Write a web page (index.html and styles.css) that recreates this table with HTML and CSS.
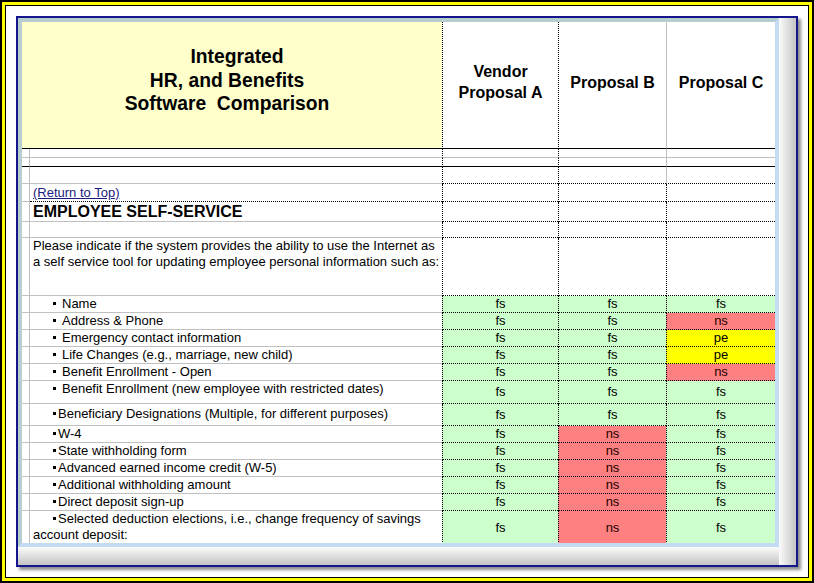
FILE: index.html
```html
<!DOCTYPE html>
<html>
<head>
<meta charset="utf-8">
<title>Integrated HR, and Benefits Software Comparison</title>
<link rel="stylesheet" href="styles.css">
</head>
<body>
<div class="frame">
  <div class="frame-yellow">
    <div class="frame-line">
      <div class="window">
        <div class="sheet">
          <table class="grid">
            <colgroup>
              <col class="w-a"><col class="w-b"><col class="w-c"><col class="w-d"><col class="w-e">
            </colgroup>
            <tr class="h127">
              <td colspan="2" class="title kb"><span class="t1">Integrated</span><br>HR, and Benefits<br>Software&nbsp; Comparison</td>
              <td class="hd dl kb">Vendor<br>Proposal A</td>
              <td class="hd dl kb">Proposal B</td>
              <td class="hd gl kb">Proposal C</td>
            </tr>
            <tr class="h9">
              <td class="a gb"></td><td class="gb"></td><td class="dl gb"></td><td class="dl gb"></td><td class="gl gb"></td>
            </tr>
            <tr class="h9">
              <td class="a kb"></td><td class="kb"></td><td class="dl kb"></td><td class="dl kb"></td><td class="gl kb"></td>
            </tr>
            <tr class="h17">
              <td class="a gb"></td><td class="gb"></td><td class="dl db"></td><td class="dl db"></td><td class="gl db"></td>
            </tr>
            <tr class="h18">
              <td class="a gb"></td><td class="b db"><a class="link" href="#top">(Return to Top)</a></td><td class="dl db"></td><td class="dl db"></td><td class="dl db"></td>
            </tr>
            <tr class="h20">
              <td class="a gb"></td><td class="b gb section">EMPLOYEE SELF-SERVICE</td><td class="dl db"></td><td class="dl db"></td><td class="dl db"></td>
            </tr>
            <tr class="h16">
              <td class="a gb"></td><td class="gb"></td><td class="dl db"></td><td class="dl db"></td><td class="dl db"></td>
            </tr>
            <tr class="h58">
              <td class="a gb"></td><td class="b gb top">Please indicate if the system provides the ability to use the Internet as<br>a self service tool for updating employee personal information such as:</td><td class="dl db"></td><td class="dl db"></td><td class="dl db"></td>
            </tr>
            <tr class="h17">
              <td class="a gb"></td><td class="b gb ind"><span class="bul sp"></span>Name</td>
              <td class="v fs">fs</td><td class="v fs">fs</td><td class="v fs">fs</td>
            </tr>
            <tr class="h17">
              <td class="a gb"></td><td class="b gb ind"><span class="bul sp"></span>Address &amp; Phone</td>
              <td class="v fs">fs</td><td class="v fs">fs</td><td class="v ns">ns</td>
            </tr>
            <tr class="h17">
              <td class="a gb"></td><td class="b gb ind"><span class="bul sp"></span>Emergency contact information</td>
              <td class="v fs">fs</td><td class="v fs">fs</td><td class="v pe">pe</td>
            </tr>
            <tr class="h17">
              <td class="a gb"></td><td class="b gb ind"><span class="bul sp"></span>Life Changes (e.g., marriage, new child)</td>
              <td class="v fs">fs</td><td class="v fs">fs</td><td class="v pe">pe</td>
            </tr>
            <tr class="h17">
              <td class="a gb"></td><td class="b gb ind"><span class="bul sp"></span>Benefit Enrollment - Open</td>
              <td class="v fs">fs</td><td class="v fs">fs</td><td class="v ns">ns</td>
            </tr>
            <tr class="h23">
              <td class="a gb"></td><td class="b gb ind top"><span class="bul sp"></span>Benefit Enrollment (new employee with restricted dates)</td>
              <td class="v fs">fs</td><td class="v fs">fs</td><td class="v fs">fs</td>
            </tr>
            <tr class="h22">
              <td class="a gb"></td><td class="b gb ind mid1"><span class="bul"></span>Beneficiary Designations (Multiple, for different purposes)</td>
              <td class="v fs">fs</td><td class="v fs">fs</td><td class="v fs">fs</td>
            </tr>
            <tr class="h17">
              <td class="a gb"></td><td class="b gb ind"><span class="bul"></span>W-4</td>
              <td class="v fs">fs</td><td class="v ns">ns</td><td class="v fs">fs</td>
            </tr>
            <tr class="h17">
              <td class="a gb"></td><td class="b gb ind"><span class="bul"></span>State withholding form</td>
              <td class="v fs">fs</td><td class="v ns">ns</td><td class="v fs">fs</td>
            </tr>
            <tr class="h17">
              <td class="a gb"></td><td class="b gb ind"><span class="bul"></span>Advanced earned income credit (W-5)</td>
              <td class="v fs">fs</td><td class="v ns">ns</td><td class="v fs">fs</td>
            </tr>
            <tr class="h17">
              <td class="a gb"></td><td class="b gb ind"><span class="bul"></span>Additional withholding amount</td>
              <td class="v fs">fs</td><td class="v ns">ns</td><td class="v fs">fs</td>
            </tr>
            <tr class="h17">
              <td class="a gb"></td><td class="b gb ind"><span class="bul"></span>Direct deposit sign-up</td>
              <td class="v fs">fs</td><td class="v ns">ns</td><td class="v fs">fs</td>
            </tr>
            <tr class="h33">
              <td class="a"></td><td class="b ind top"><span class="bul"></span>Selected deduction elections, i.e., change frequency of savings<br>account deposit:</td>
              <td class="v fs nb">fs</td><td class="v ns nb">ns</td><td class="v fs nb">fs</td>
            </tr>
          </table>
        </div>
      </div>
    </div>
  </div>
</div>
</body>
</html>
```

FILE: styles.css
```css
* { box-sizing: border-box; }
html, body { margin: 0; padding: 0; }
body {
  width: 814px;
  height: 583px;
  overflow: hidden;
  background: #fff;
  font-family: "Liberation Sans", Arial, sans-serif;
  color: #000;
}
.frame {
  width: 814px;
  height: 583px;
  border: 2px solid #000;
}
.frame-yellow {
  height: 100%;
  border: 3px solid #ffff00;
}
.frame-line {
  height: 100%;
  border: 1px solid #000;
  background: #fff;
  padding: 10px 0 0 10px;
}
.window {
  width: 782px;
  height: 551px;
  border: 2px solid #15158e;
  box-shadow: 3px 3px 3px rgba(0, 0, 0, 0.45);
  padding: 0 17px 18px 0;
  background:
    linear-gradient(to right, #fbfbfb, #c4c4c4) right top / 17px 100% no-repeat,
    linear-gradient(to bottom, #fbfbfb, #c4c4c4) left bottom / 100% 18px no-repeat,
    #f4f4f4;
}
.sheet {
  width: 761px;
  height: 529px;
  border-left: 4px solid #b6cece;
  border-top: 4px solid #b6cece;
  border-right: 4px solid #c4dcf2;
  border-bottom: 4px solid #c4dcf2;
  background: #fff;
  overflow: hidden;
}
.grid {
  width: 753px;
  table-layout: fixed;
  border-collapse: separate;
  border-spacing: 0;
  font-size: 13px;
  line-height: 16px;
}
.w-a { width: 8px; }
.w-b { width: 412px; }
.w-c { width: 116px; }
.w-d { width: 108px; }
.w-e { width: 109px; }

.grid td {
  padding: 0;
  vertical-align: middle;
  white-space: nowrap;
  overflow: hidden;
}
.h127 { height: 127px; }
.h9 { height: 9px; }
.h16 { height: 16px; }
.h17 { height: 17px; }
.h18 { height: 18px; }
.h20 { height: 20px; }
.h22 { height: 22px; }
.h23 { height: 23px; }
.h33 { height: 33px; }
.h58 { height: 58px; }

.a { border-right: 1px solid #c0c0c0; }
.gb { border-bottom: 1px solid #c0c0c0; }
.kb { border-bottom: 1px solid #000; }
.db { border-bottom: 1px dotted #000; }
.dl { border-left: 1px dotted #000; }
.gl { border-left: 1px solid #c0c0c0; }

.title {
  background: #ffffcc;
  text-align: center;
  vertical-align: top !important;
  padding: 23px 10px 0 0 !important;
  font-size: 19.3px;
  font-weight: bold;
  line-height: 23.5px;
}
.t1 { padding-left: 20px; }
.hd {
  text-align: center;
  font-size: 16px;
  font-weight: bold;
  line-height: 21px;
  padding-bottom: 6px !important;
}
.b { padding-left: 3px !important; }
.top { vertical-align: top !important; }
.mid1 { padding-bottom: 2px !important; }
.ind { text-indent: 20px; }
.section {
  font-size: 16px;
  font-weight: bold;
}
.link {
  color: #1a1a80;
  text-decoration: underline;
}
.bul {
  display: inline-block;
  width: 3px;
  height: 3px;
  background: #000;
  vertical-align: 3px;
  margin-right: 2px;
  text-indent: 0;
}
.bul.sp { margin-right: 6px; }

.v {
  text-align: center;
  border-left: 1px dotted #000;
  border-bottom: 1px dotted #000;
}
.v.nb { border-bottom: 0; }
.fs { background: #ccffcc; }
.ns { background: #ff8080; color: #1a0000; }
.pe { background: #ffff00; }
```
